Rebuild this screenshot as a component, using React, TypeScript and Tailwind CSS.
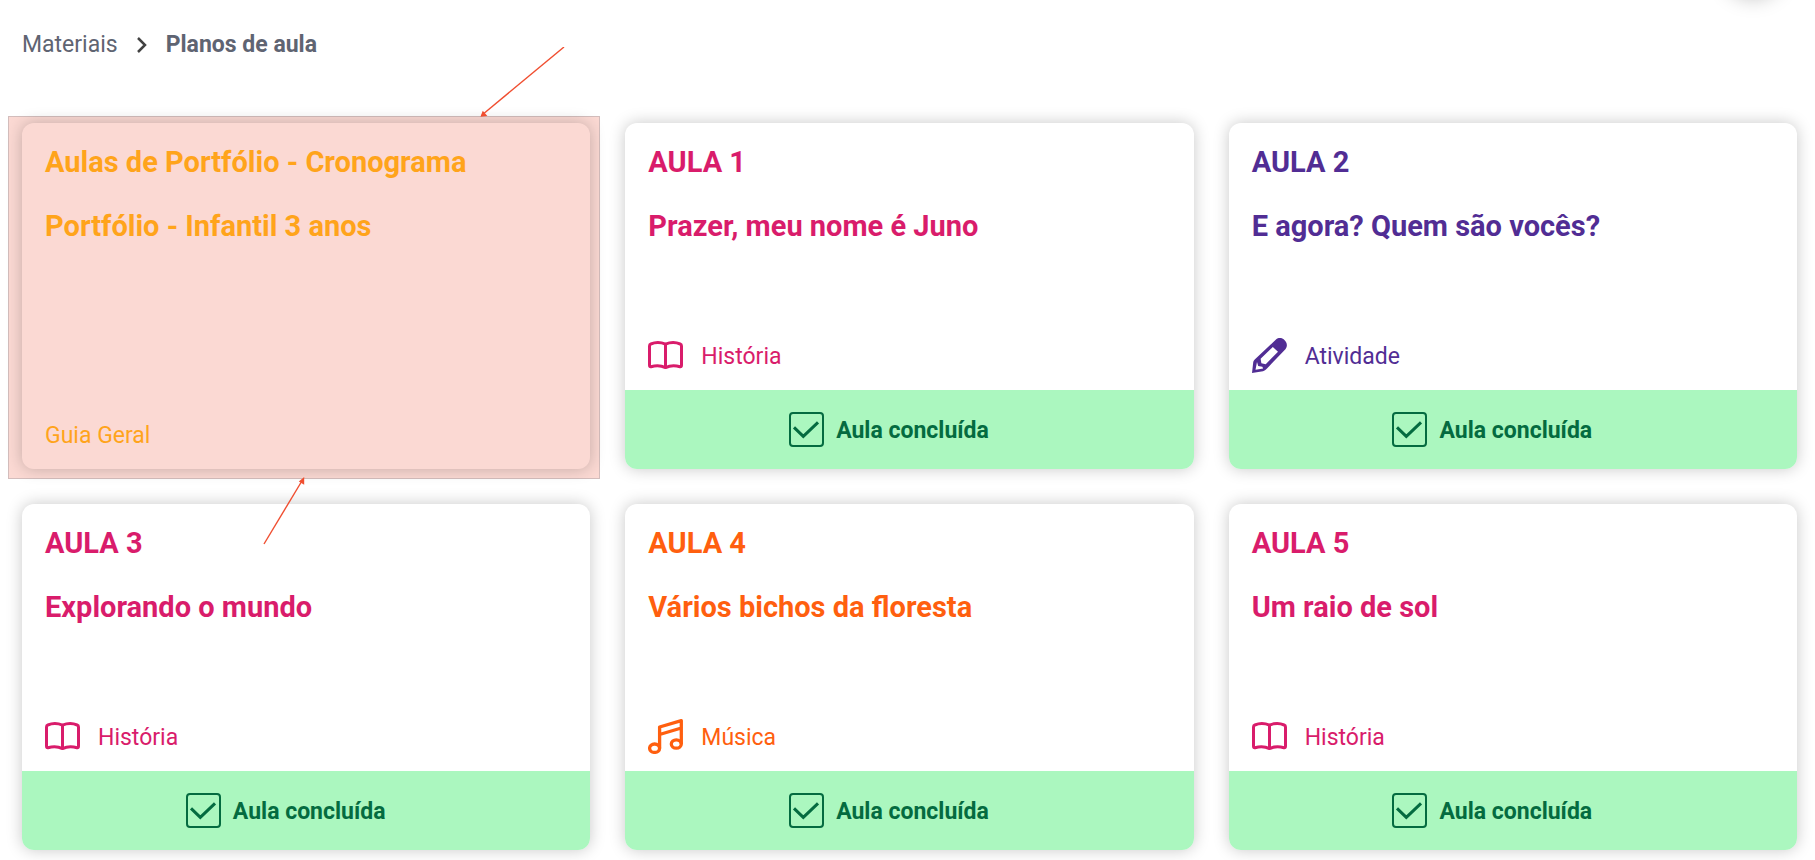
import { ReactNode } from 'react';

type Kind = 'guia' | 'historia' | 'atividade' | 'musica';

interface Lesson {
  title: string;
  subtitle: string;
  kind: Kind;
  done: boolean;
}

const lessons: Lesson[] = [
  { title: 'Aulas de Portfólio - Cronograma', subtitle: 'Portfólio - Infantil 3 anos', kind: 'guia', done: false },
  { title: 'AULA 1', subtitle: 'Prazer, meu nome é Juno', kind: 'historia', done: true },
  { title: 'AULA 2', subtitle: 'E agora? Quem são vocês?', kind: 'atividade', done: true },
  { title: 'AULA 3', subtitle: 'Explorando o mundo', kind: 'historia', done: true },
  { title: 'AULA 4', subtitle: 'Vários bichos da floresta', kind: 'musica', done: true },
  { title: 'AULA 5', subtitle: 'Um raio de sol', kind: 'historia', done: true },
];

function BookIcon() {
  return (
    <svg className="size-[35px] shrink-0" viewBox="0 0 35 35" fill="none" stroke="currentColor" strokeWidth="3" strokeLinejoin="round" aria-hidden="true">
      <path d="M17.5 6.2C13 4.3 7 4.3 2.8 6C1.9 6.3 1.5 7 1.5 8V27C1.5 28.4 2 29 3 28.7C8 27.3 13 27.4 17.5 29.6C22 27.4 27 27.3 32 28.7C33 29 33.5 28.4 33.5 27V8C33.5 7 33.1 6.3 32.2 6C28 4.3 22 4.3 17.5 6.2Z" />
      <path d="M17.5 6V29.5" />
    </svg>
  );
}

function PencilIcon() {
  return (
    <svg className="size-[35px] shrink-0" viewBox="0 0 35 35" fill="currentColor" aria-hidden="true">
      <path fillRule="evenodd" d="M24 1.5C26.5 -.5 30 -.4 32.4 2C35.4 4.7 35.6 8.5 33.4 11.2L15 30.5C13.5 32.2 12.5 32.8 11 33.2L0 35L1.2 24.5C1.4 23 2 22.200 3 21.2ZM20.8 9L8.6 20.8L9.4 25.2L13.7 26.2L26 13.8ZM5 24L3.5 31.7L11.2 30.4L10.300 28.8L6.200 28.1Z" />
    </svg>
  );
}

function MusicIcon() {
  return (
    <svg className="size-[35px] shrink-0" viewBox="0 0 35 35" fill="none" stroke="currentColor" strokeWidth="3.3" strokeLinejoin="round" aria-hidden="true">
      <ellipse cx="6.6" cy="29.2" rx="5" ry="4.2" />
      <ellipse cx="28.3" cy="25" rx="5" ry="4.2" />
      <path d="M11.6 29.2V8L33.3 1.7V25M11.6 15.5L33.3 9" />
    </svg>
  );
}

const kinds: Record<Kind, { label: string; color: string; icon: ReactNode }> = {
  guia: { label: 'Guia Geral', color: 'text-[#ffa41b]', icon: null },
  historia: { label: 'História', color: 'text-[#d91c6b]', icon: <BookIcon /> },
  atividade: { label: 'Atividade', color: 'text-[#512d94]', icon: <PencilIcon /> },
  musica: { label: 'Música', color: 'text-[#ff5f0f]', icon: <MusicIcon /> },
};

function DoneBar() {
  return (
    <label className="flex h-[79px] items-center justify-center gap-3 rounded-b-xl bg-[#abf7bf] pr-[41px] text-[23px] leading-8 font-bold text-[#046b40]">
      <span className="grid size-[35px] shrink-0">
        <input type="checkbox" defaultChecked className="peer col-start-1 row-start-1 size-[35px] appearance-none rounded border-2 border-[#046b40]" />
        <svg className="pointer-events-none invisible col-start-1 row-start-1 size-[35px] peer-checked:visible" viewBox="0 0 35 35" fill="none" stroke="currentColor" strokeWidth="3" aria-hidden="true">
          <path d="M5 15.3L14.3 24.3L29 10.3" />
        </svg>
      </span>
      <span className="pt-0.5">Aula concluída</span>
    </label>
  );
}

function LessonCard({ lesson }: { lesson: Lesson }) {
  const { label, color, icon } = kinds[lesson.kind];

  return (
    <article className="relative flex min-h-[346px] flex-col rounded-xl shadow-[0_0_16px_rgba(0,0,0,0.22)]">
      <div className={`flex flex-1 flex-col px-[23px] ${color}`}>
        <h2 className="pt-[21px] text-[29px] leading-9 font-bold">{lesson.title}</h2>
        <h3 className="pt-7 text-[29px] leading-9 font-bold">{lesson.subtitle}</h3>
        <div className="mt-auto flex items-center gap-[18px] pb-[17px] text-[23px] leading-8">
          {icon}
          <span className="pt-0.5">{label}</span>
        </div>
      </div>
      {lesson.done && <DoneBar />}
    </article>
  );
}

// Pink frame around the general guide, with the two arrows pointing at it
function Highlight() {
  return (
    <>
      <div className="absolute -top-[7px] -right-[10px] -bottom-[10px] -left-[14px] border border-[#d3bdbc] bg-[#fbd9d3]" />
      <svg className="pointer-events-none absolute -top-[76px] left-[455px] z-10 h-[72px] w-[90px]" viewBox="0 0 90 72" fill="none" stroke="#f04e30" strokeWidth="1.4" aria-hidden="true">
        <path d="M87 0L5 68" />
        <path d="M4.5 69L6 65L9 68.5Z" fill="#f04e30" />
      </svg>
      <svg className="pointer-events-none absolute top-[354px] left-[240px] z-10 h-[70px] w-[50px]" viewBox="0 0 50 70" fill="none" stroke="#f04e30" strokeWidth="1.4" aria-hidden="true">
        <path d="M2 67L40.5 3" />
        <path d="M41.5 1.5L38 4.5L41.5 6.5Z" fill="#f04e30" />
      </svg>
    </>
  );
}

export default function App() {
  return (
    <main className="relative overflow-hidden bg-white pr-[18px] pb-[11px] pl-[22px] font-[Roboto,sans-serif]">
      <div className="absolute -top-[62px] right-[32px] size-[60px] rounded-full shadow-[0_0_20px_rgba(0,0,0,0.25)]" />
      <nav aria-label="Breadcrumb" className="flex h-[123px] items-start gap-4 pt-[29px] text-[23px] leading-8 text-[#5f6472]">
        <a href="#materiais">Materiais</a>
        <svg className="mt-2 h-4 w-4" viewBox="0 0 16 16" fill="none" stroke="#424242" strokeWidth="2.5" aria-hidden="true">
          <path d="M4 1L11 8L4 15" />
        </svg>
        <a href="#planos" aria-current="page" className="font-bold">Planos de aula</a>
      </nav>
      <section className="grid grid-cols-3 gap-[35px]">
        {lessons.map((lesson) => (
          <div key={lesson.title} className="relative">
            {lesson.kind === 'guia' && <Highlight />}
            <LessonCard lesson={lesson} />
          </div>
        ))}
      </section>
    </main>
  );
}
